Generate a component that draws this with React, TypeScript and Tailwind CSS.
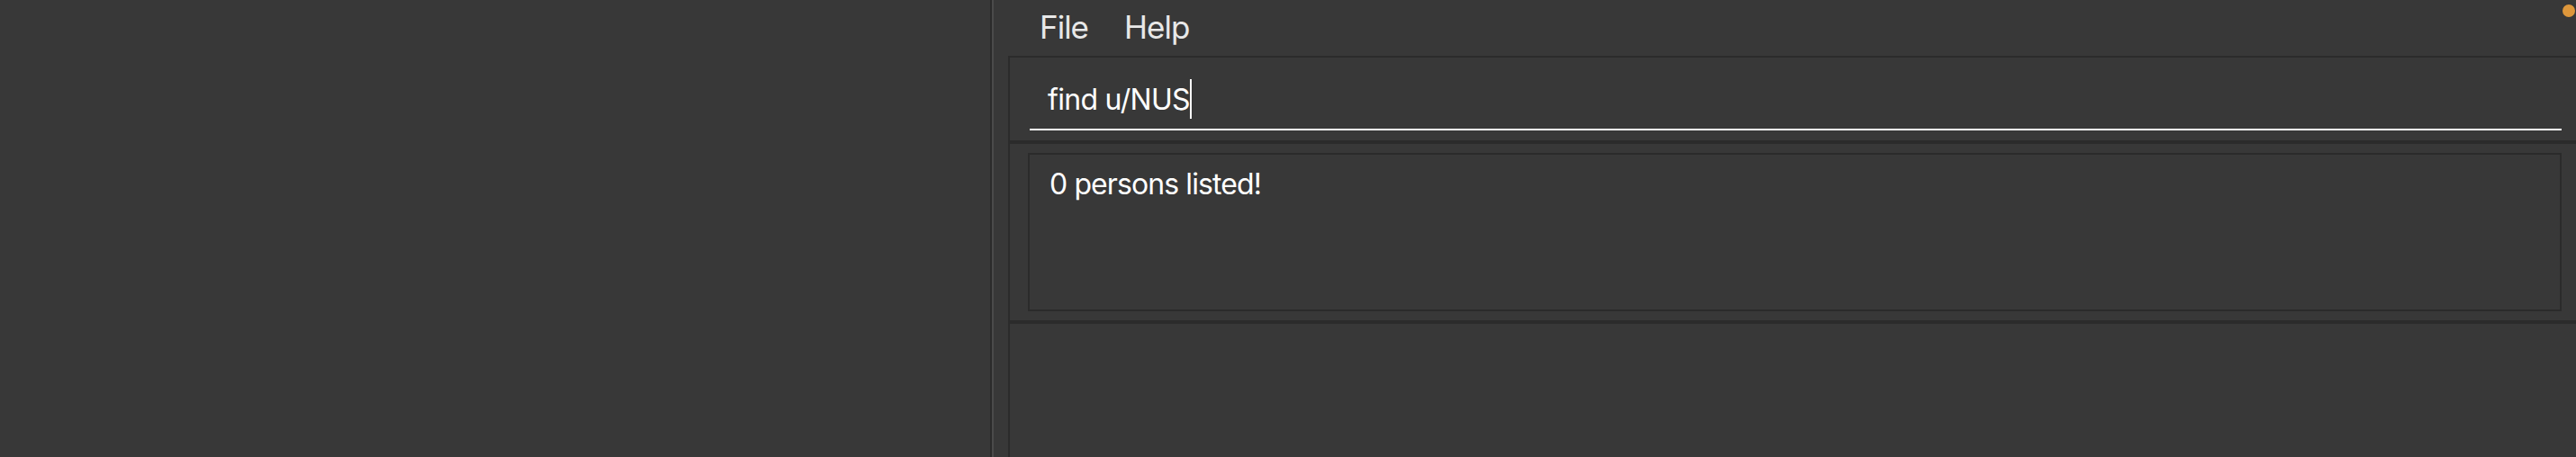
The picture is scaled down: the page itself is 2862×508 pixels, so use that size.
import React from 'react';

const font = { fontFamily: 'Inter, "Noto Sans", sans-serif' };

function MenuBar() {
  return (
    <div className="h-[62px] flex items-start pt-[13px] pl-[51px] gap-[40px] text-[35px] tracking-[-1px] leading-none text-[#e8e8e8]">
      <span>File</span>
      <span>Help</span>
    </div>
  );
}

function CommandBox() {
  return (
    <div className="h-[92px] pt-[31px] pl-[22px] pr-[16px]">
      <div className="border-b-2 border-white h-[50px] pl-[20px]">
        <div className="flex items-start text-[32px] tracking-[-0.7px] leading-none text-white">
          <span>find u/NUS</span>
          <span className="w-[2px] h-[44px] bg-white -mt-[7px]" />
        </div>
      </div>
    </div>
  );
}

function ResultBox() {
  return (
    <div className="h-[196px] pt-[10px] pb-[10px] pl-[20px] pr-[16px]">
      <div className="h-full border-2 border-[#2b2b2b] pt-[17px] pl-[22px] text-[32px] tracking-[-0.9px] leading-none text-white">
        0 persons listed!
      </div>
    </div>
  );
}

export default function App() {
  return (
    <div className="relative w-[2862px] h-[508px] flex bg-[#383838] overflow-hidden" style={font}>
      <div className="w-[1100px] shrink-0" />
      <div className="w-[2px] bg-[#2b2b2b]" />
      <div className="w-[2px] bg-[#4a4a4a]" />
      <div className="flex-1 flex flex-col">
        <MenuBar />
        <div className="ml-[16px] flex-1 flex flex-col border-l-2 border-t-2 border-[#2b2b2b]">
          <CommandBox />
          <div className="h-[4px] bg-[#2b2b2b]" />
          <ResultBox />
          <div className="h-[4px] bg-[#2b2b2b]" />
          <div className="flex-1" />
        </div>
      </div>
      <div className="absolute top-[5px] right-[1px] w-[14px] h-[14px] rounded-full bg-[#de973b]" />
    </div>
  );
}
